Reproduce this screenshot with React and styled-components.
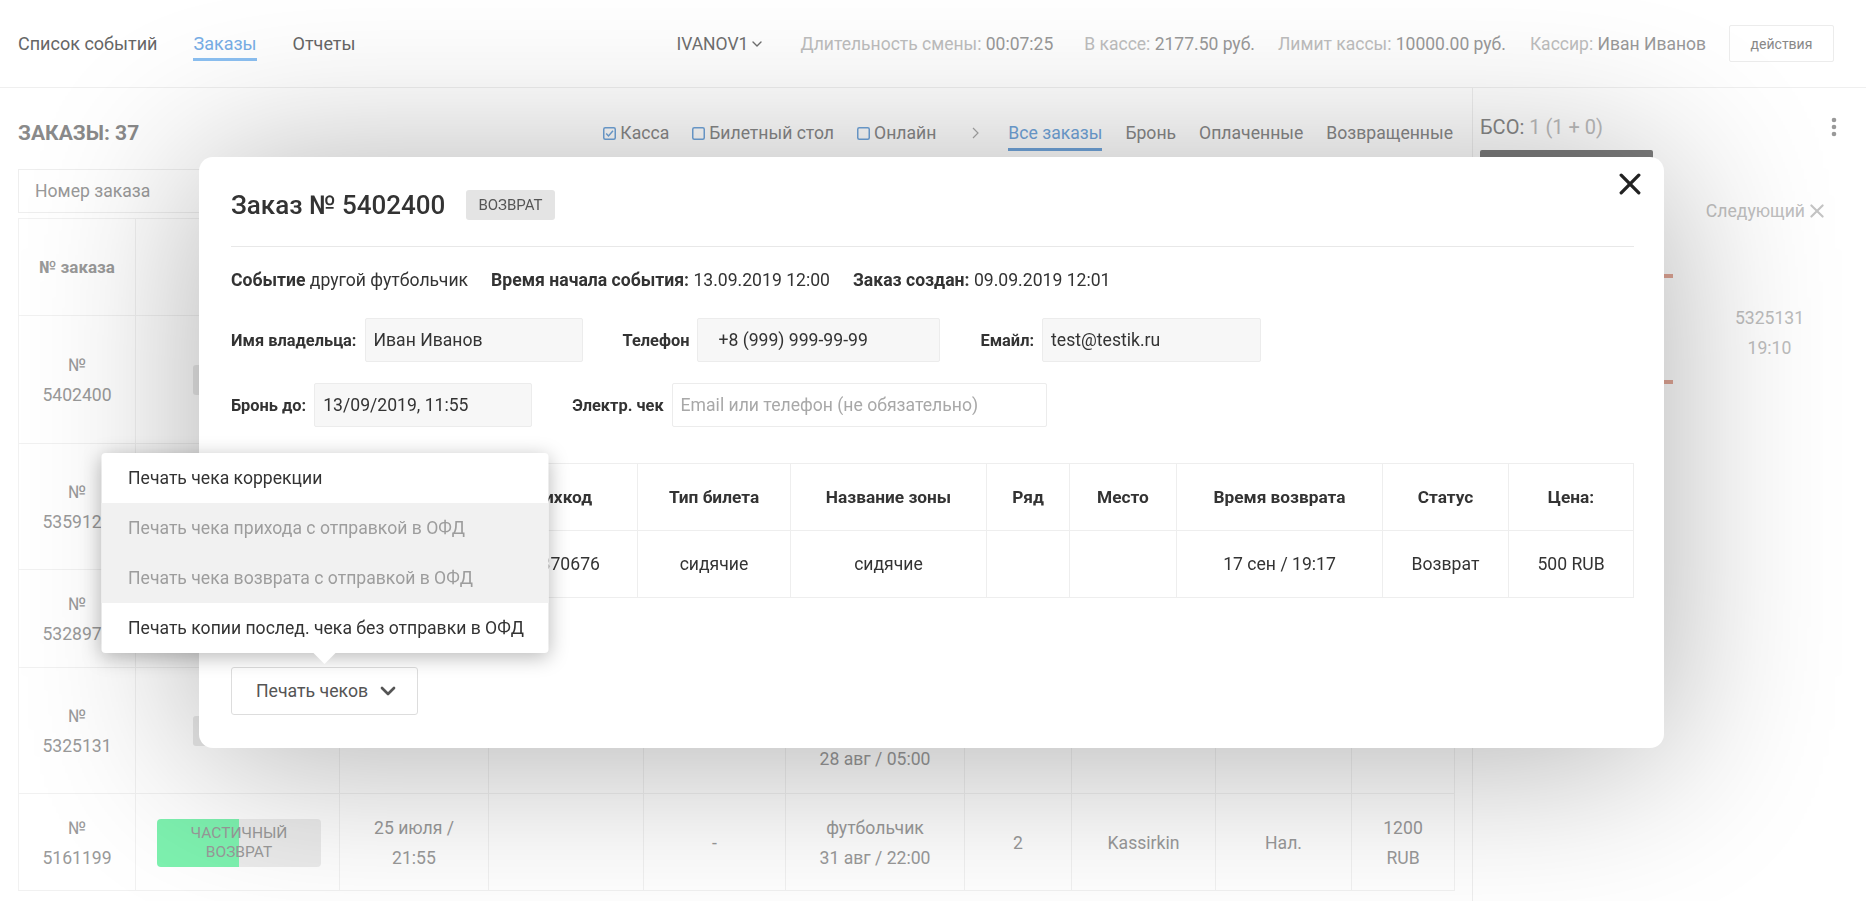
import React from "react";
import styled, { createGlobalStyle } from "styled-components";

const GlobalStyle = createGlobalStyle`
    html, body {
        margin: 0;
        padding: 0;
        background: #fff;
        font-family: Roboto, "Liberation Sans", Arial, sans-serif;
        color: #333;
        overflow: hidden;
    }
    * { box-sizing: border-box; }
`;

// rows of the orders list behind the modal; cells that the modal hides stay empty
const orders = [
    { num: "5402400", h: 128, badge: "short" },
    { num: "5359124", h: 126, badge: "short" },
    { num: "5328971", h: 98, badge: "none" },
    { num: "5325131", h: 126, badge: "short", event: ["28 авг / 05:00"] },
    { num: "5161199", h: 97, badge: "partial", date: ["25 июля /", "21:55"], code: "-", event: ["футбольчик", "31 авг / 22:00"], qty: "2", cashier: "Kassirkin", pay: "Нал.", sum: ["1200", "RUB"] },
];

const bgCols = [117, 204, 149, 155, 142, 179, 107, 144, 136, 103];
const ticketCols = [232, 174, 153, 196, 83, 107, 206, 126, 125];

const menuItems = [
    { text: "Печать чека коррекции", disabled: false },
    { text: "Печать чека прихода с отправкой в ОФД", disabled: true },
    { text: "Печать чека возврата с отправкой в ОФД", disabled: true },
    { text: "Печать копии послед. чека без отправки в ОФД", disabled: false },
];

function Chevron({ size = 12, stroke = 2, color = "currentColor" }) {
    return (
        <svg width={size} height={size} viewBox="0 0 12 12" fill="none">
            <polyline points="2,4 6,8 10,4" stroke={color} strokeWidth={stroke} strokeLinecap="round" strokeLinejoin="round" />
        </svg>
    );
}

function Cross({ size, stroke, color }) {
    return (
        <svg width={size} height={size} viewBox="0 0 20 20" fill="none">
            <line x1="2" y1="2" x2="18" y2="18" stroke={color} strokeWidth={stroke} strokeLinecap="round" />
            <line x1="18" y1="2" x2="2" y2="18" stroke={color} strokeWidth={stroke} strokeLinecap="round" />
        </svg>
    );
}

function CheckBox({ checked }) {
    return (
        <svg width="13" height="13" viewBox="0 0 13 13" fill="none">
            <rect x="0.75" y="0.75" width="11.5" height="11.5" rx="1.5" stroke="#72a6dc" strokeWidth="1.5" />
            {checked && <polyline points="3.2,6.6 5.5,9 10,3.8" stroke="#72a6dc" strokeWidth="1.5" fill="none" />}
        </svg>
    );
}

function lines(arr) {
    if (!arr) return null;
    return arr.map((l, i) => <div key={i}>{l}</div>);
}

export default function App() {
    return (
        <Page>
            <GlobalStyle />
            <TopBar>
                <NavLinks>
                    <NavLink>Список событий</NavLink>
                    <NavLink $active>Заказы</NavLink>
                    <NavLink>Отчеты</NavLink>
                </NavLinks>
                <Stats>
                    <UserName>IVANOV1 <Chevron size={12} stroke={1.4} /></UserName>
                    <Stat $ml={37}>Длительность смены: <b>00:07:25</b></Stat>
                    <Stat $ml={31}>В кассе: <b>2177.50 руб.</b></Stat>
                    <Stat $ml={23}>Лимит кассы: <b>10000.00 руб.</b></Stat>
                    <Stat $ml={24}>Кассир: <b>Иван Иванов</b></Stat>
                    <ActionsButton>действия</ActionsButton>
                </Stats>
            </TopBar>

            <Main>
                <LeftPane>
                    <Toolbar>
                        <PageTitle>ЗАКАЗЫ: 37</PageTitle>
                        <Filters>
                            <Check><CheckBox checked />Касса</Check>
                            <Check><CheckBox />Билетный стол</Check>
                            <Check><CheckBox />Онлайн</Check>
                            <Arrow>
                                <svg width="9" height="14" viewBox="0 0 9 14" fill="none">
                                    <polyline points="2,2 7,7 2,12" stroke="#aaa" strokeWidth="1.2" />
                                </svg>
                            </Arrow>
                            <Tab $active>Все заказы</Tab>
                            <Tab>Бронь</Tab>
                            <Tab>Оплаченные</Tab>
                            <Tab>Возвращенные</Tab>
                        </Filters>
                    </Toolbar>

                    <Search placeholder="Номер заказа" />

                    <OrdersTable>
                        <colgroup>
                            {bgCols.map((w, i) => <col key={i} style={{ width: w }} />)}
                        </colgroup>
                        <thead>
                            <tr>
                                <OrdersHead>№ заказа</OrdersHead>
                                {bgCols.slice(1).map((w, i) => <OrdersHead key={i} />)}
                            </tr>
                        </thead>
                        <tbody>
                            {orders.map((o) => (
                                <OrderRow key={o.num} $h={o.h}>
                                    <OrderCell>№<br />{o.num}</OrderCell>
                                    <OrderCell>
                                        {o.badge === "short" && <ShortBadge>возврат</ShortBadge>}
                                        {o.badge === "partial" && (
                                            <PartialBadge $progress={50}>частичный<br />возврат</PartialBadge>
                                        )}
                                    </OrderCell>
                                    <OrderCell>{lines(o.date)}</OrderCell>
                                    <OrderCell></OrderCell>
                                    <OrderCell>{o.code}</OrderCell>
                                    <OrderCell $bottom={o.num === "5325131"}>{lines(o.event)}</OrderCell>
                                    <OrderCell>{o.qty}</OrderCell>
                                    <OrderCell>{o.cashier}</OrderCell>
                                    <OrderCell>{o.pay}</OrderCell>
                                    <OrderCell>{lines(o.sum)}</OrderCell>
                                </OrderRow>
                            ))}
                        </tbody>
                    </OrdersTable>
                </LeftPane>

                <RightPane>
                    <BsoRow>
                        <Bso>БСО: <span>1 (1 + 0)</span></Bso>
                        <svg width="6" height="20" viewBox="0 0 6 20">
                            <circle cx="3" cy="3" r="2.3" fill="#999" />
                            <circle cx="3" cy="10" r="2.3" fill="#999" />
                            <circle cx="3" cy="17" r="2.3" fill="#999" />
                        </svg>
                    </BsoRow>
                    <BsoBar />
                    <NextRow>Следующий <Cross size={14} stroke={3} color="#c4c4c4" /></NextRow>
                    <Timeline>
                        <TimelineSlot />
                        <TimelineText>5325131<br />19:10</TimelineText>
                    </Timeline>
                </RightPane>
            </Main>

            <Overlay>
                <Modal>
                    <CloseButton>
                        <Cross size={22} stroke={3} color="#222" />
                    </CloseButton>
                    <ModalHeader>
                        <ModalTitle>Заказ № 5402400</ModalTitle>
                        <StatusTag>возврат</StatusTag>
                    </ModalHeader>

                    <InfoRow>
                        <span><b>Событие</b> другой футбольчик</span>
                        <span><b>Время начала события:</b> 13.09.2019 12:00</span>
                        <span><b>Заказ создан:</b> 09.09.2019 12:01</span>
                    </InfoRow>

                    <FieldsRow $top={27}>
                        <Field>
                            <FieldLabel>Имя владельца:</FieldLabel>
                            <FieldInput $w={218} readOnly value="Иван Иванов" />
                        </Field>
                        <Field>
                            <FieldLabel>Телефон</FieldLabel>
                            <FieldInput $w={243} $pad={20} readOnly value="+8 (999) 999-99-99" />
                        </Field>
                        <Field>
                            <FieldLabel>Емайл:</FieldLabel>
                            <FieldInput $w={219} readOnly value="test@testik.ru" />
                        </Field>
                    </FieldsRow>

                    <FieldsRow $top={21}>
                        <Field>
                            <FieldLabel>Бронь до:</FieldLabel>
                            <FieldInput $w={218} readOnly value="13/09/2019, 11:55" />
                        </Field>
                        <Field>
                            <FieldLabel>Электр. чек</FieldLabel>
                            <FieldInput $w={375} $white placeholder="Email или телефон (не обязательно)" />
                        </Field>
                    </FieldsRow>

                    <TicketTable>
                        <colgroup>
                            {ticketCols.map((w, i) => <col key={i} style={{ width: w }} />)}
                        </colgroup>
                        <thead>
                            <tr>
                                <TicketHead></TicketHead>
                                <TicketHead>Штрихкод</TicketHead>
                                <TicketHead>Тип билета</TicketHead>
                                <TicketHead>Название зоны</TicketHead>
                                <TicketHead>Ряд</TicketHead>
                                <TicketHead>Место</TicketHead>
                                <TicketHead>Время возврата</TicketHead>
                                <TicketHead>Статус</TicketHead>
                                <TicketHead>Цена:</TicketHead>
                            </tr>
                        </thead>
                        <tbody>
                            <tr>
                                <TicketCell></TicketCell>
                                <TicketCell>9843370676</TicketCell>
                                <TicketCell>сидячие</TicketCell>
                                <TicketCell>сидячие</TicketCell>
                                <TicketCell></TicketCell>
                                <TicketCell></TicketCell>
                                <TicketCell>17 сен / 19:17</TicketCell>
                                <TicketCell>Возврат</TicketCell>
                                <TicketCell>500 RUB</TicketCell>
                            </tr>
                        </tbody>
                    </TicketTable>

                    <PrintWrap>
                        <PrintMenu>
                            {menuItems.map((m) => (
                                <MenuItem key={m.text} $disabled={m.disabled}>{m.text}</MenuItem>
                            ))}
                        </PrintMenu>
                        <PrintButton>
                            Печать чеков
                            <Chevron size={18} stroke={1.8} color="#555" />
                        </PrintButton>
                    </PrintWrap>
                </Modal>
            </Overlay>
        </Page>
    );
}

const Page = styled.div`
    width: 100%;
    height: 100vh;
    display: flex;
    flex-direction: column;
    position: relative;
`;

const TopBar = styled.header`
    height: 88px;
    flex-shrink: 0;
    display: flex;
    align-items: center;
    padding: 0 32px 0 18px;
    border-bottom: 1px solid #efefef;
`;

const NavLinks = styled.nav`
    display: flex;
    gap: 36px;
`;

const NavLink = styled.a`
    font-size: 18px;
    line-height: 22px;
    padding: 6px 0 3px;
    color: ${(p) => (p.$active ? "#78aee6" : "#666")};
    border-bottom: 3px solid ${(p) => (p.$active ? "#8cc0f2" : "transparent")};
    cursor: pointer;
`;

const Stats = styled.div`
    margin-left: auto;
    display: flex;
    align-items: center;
    font-size: 17.5px;
`;

const UserName = styled.div`
    display: flex;
    align-items: center;
    gap: 3px;
    color: #6f6f6f;
`;

const Stat = styled.div`
    margin-left: ${(p) => p.$ml}px;
    color: #bdbdbd;
    b {
        font-weight: 400;
        color: #999;
    }
`;

const ActionsButton = styled.button`
    margin-left: 23px;
    width: 105px;
    height: 37px;
    background: #fff;
    border: 1px solid #ececec;
    border-radius: 2px;
    color: #888;
    font-family: inherit;
    font-size: 14px;
`;

const Main = styled.div`
    flex: 1;
    display: flex;
`;

const LeftPane = styled.section`
    width: 1473px;
    flex-shrink: 0;
    padding: 0 19px 0 18px;
    border-right: 1px solid #eee;
`;

const Toolbar = styled.div`
    height: 65px;
    display: flex;
    align-items: flex-end;
    justify-content: space-between;
    padding-bottom: 2px;
`;

const PageTitle = styled.h1`
    margin: 0 0 6px;
    font-size: 21px;
    line-height: 24px;
    font-weight: 700;
    color: #8a8a8a;
`;

const Filters = styled.div`
    display: flex;
    align-items: flex-end;
    gap: 23px;
    font-size: 17.6px;
    color: #888;
`;

const Check = styled.label`
    display: flex;
    align-items: center;
    gap: 4px;
    line-height: 24px;
    margin-bottom: 6px;
`;

const Arrow = styled.span`
    display: flex;
    align-items: center;
    height: 24px;
    margin: 0 5px 6px 12px;
`;

const Tab = styled.span`
    line-height: 24px;
    padding-bottom: 3px;
    color: ${(p) => (p.$active ? "#72a6dc" : "#888")};
    border-bottom: 3px solid ${(p) => (p.$active ? "#72a6dc" : "transparent")};
`;

const Search = styled.input`
    display: block;
    margin-top: 16px;
    width: 340px;
    height: 44px;
    border: 1px solid #eee;
    padding: 0 16px;
    font-family: inherit;
    font-size: 17.6px;
    color: #555;
    outline: none;
    &::placeholder { color: #999; }
`;

const OrdersTable = styled.table`
    margin-top: 5px;
    width: 1436px;
    border-collapse: collapse;
    table-layout: fixed;
`;

const OrdersHead = styled.th`
    height: 97px;
    border: 1px solid #f1f1f1;
    font-size: 17px;
    font-weight: 700;
    color: #9a9a9a;
    text-align: center;
`;

const OrderRow = styled.tr`
    height: ${(p) => p.$h}px;
`;

const OrderCell = styled.td`
    border: 1px solid #f1f1f1;
    text-align: center;
    vertical-align: ${(p) => (p.$bottom ? "bottom" : "middle")};
    padding-bottom: ${(p) => (p.$bottom ? "19px" : "0")};
    font-size: 17.6px;
    line-height: 30px;
    color: #9a9a9a;
`;

const ShortBadge = styled.div`
    margin: 0 auto;
    width: 90px;
    height: 30px;
    line-height: 30px;
    border-radius: 3px;
    background: #e9e9e9;
    font-size: 13px;
    text-transform: uppercase;
    color: #999;
`;

const PartialBadge = styled.div`
    margin: 0 auto 0 20px;
    width: 164px;
    height: 48px;
    padding-top: 5px;
    border-radius: 4px;
    background: linear-gradient(90deg, #7ef2b0 ${(p) => p.$progress}%, #ececec ${(p) => p.$progress}%);
    font-size: 15.5px;
    line-height: 19px;
    text-transform: uppercase;
    color: #9a9a9a;
`;

const RightPane = styled.aside`
    flex: 1;
    display: flex;
    flex-direction: column;
`;

const BsoRow = styled.div`
    display: flex;
    justify-content: space-between;
    align-items: center;
    padding: 27px 29px 0 7px;
`;

const Bso = styled.div`
    font-size: 20px;
    line-height: 24px;
    color: #888;
    span { color: #bbb; }
`;

const BsoBar = styled.div`
    margin: 11px 0 0 7px;
    width: 173px;
    height: 40px;
    background: #7d7d7d;
    border-radius: 2px;
`;

const NextRow = styled.div`
    margin-top: 10px;
    padding-right: 42px;
    display: flex;
    justify-content: flex-end;
    align-items: center;
    gap: 5px;
    font-size: 17.6px;
    line-height: 22px;
    color: #c0c0c0;
`;

const Timeline = styled.div`
    margin-top: 52px;
    display: grid;
    grid-template-columns: 200px 1fr;
`;

const TimelineSlot = styled.div`
    height: 110px;
    border-top: 4px solid #e3a898;
    border-bottom: 4px solid #e3a898;
`;

const TimelineText = styled.div`
    align-self: center;
    padding-top: 8px;
    text-align: center;
    font-size: 17.6px;
    line-height: 30px;
    color: #bdbdbd;
`;

const Overlay = styled.div`
    position: fixed;
    inset: 0;
    display: flex;
    justify-content: center;
    align-items: flex-start;
    padding: 157px 3px 0 0;
`;

const Modal = styled.div`
    position: relative;
    width: 1465px;
    background: #fff;
    border-radius: 14px;
    padding: 0 30px 33px 32px;
    box-shadow: 0 10px 170px rgba(0, 0, 0, 0.32);
`;

const CloseButton = styled.button`
    position: absolute;
    top: 16px;
    right: 23px;
    padding: 0;
    border: 0;
    background: none;
    display: flex;
`;

const ModalHeader = styled.div`
    display: flex;
    align-items: center;
    gap: 21px;
    padding: 30px 0 23px;
    border-bottom: 1px solid #e8e8e8;
`;

const ModalTitle = styled.h2`
    margin: 0;
    font-size: 26px;
    line-height: 36px;
    font-weight: 500;
    color: #333;
`;

const StatusTag = styled.span`
    height: 30px;
    line-height: 30px;
    padding: 0 12px;
    border-radius: 3px;
    background: #e4e4e4;
    font-size: 15px;
    text-transform: uppercase;
    color: #555;
`;

const InfoRow = styled.div`
    margin-top: 22px;
    display: flex;
    gap: 23px;
    font-size: 17.6px;
    line-height: 22px;
    color: #333;
    b { font-weight: 700; }
`;

const FieldsRow = styled.div`
    margin-top: ${(p) => p.$top}px;
    display: flex;
    align-items: center;
    gap: 40px;
`;

const Field = styled.div`
    display: flex;
    align-items: center;
    gap: 8px;
`;

const FieldLabel = styled.span`
    font-size: 16.4px;
    font-weight: 700;
    color: #333;
`;

const FieldInput = styled.input`
    width: ${(p) => p.$w}px;
    height: 44px;
    padding: 0 0 0 ${(p) => p.$pad || 8}px;
    border: 1px solid #ececec;
    border-radius: 2px;
    background: ${(p) => (p.$white ? "#fff" : "#f7f7f7")};
    font-family: inherit;
    font-size: 17.6px;
    color: #333;
    outline: none;
    &::placeholder { color: #a8a8a8; }
`;

const TicketTable = styled.table`
    margin-top: 36px;
    width: 100%;
    border-collapse: collapse;
    table-layout: fixed;
`;

const TicketHead = styled.th`
    height: 67px;
    border: 1px solid #eee;
    font-size: 17.3px;
    font-weight: 700;
    color: #333;
    text-align: center;
`;

const TicketCell = styled.td`
    height: 67px;
    border: 1px solid #eee;
    font-size: 17.6px;
    color: #333;
    text-align: center;
`;

const PrintWrap = styled.div`
    position: relative;
    display: inline-block;
    margin-top: 69px;
`;

const PrintButton = styled.button`
    width: 187px;
    height: 48px;
    display: flex;
    align-items: center;
    gap: 11px;
    padding: 0 0 0 24px;
    background: #fff;
    border: 1px solid #ddd;
    border-radius: 3px;
    font-family: inherit;
    font-size: 17.7px;
    color: #555;
`;

const PrintMenu = styled.div`
    position: absolute;
    bottom: calc(100% + 14px);
    left: 50%;
    transform: translateX(-50%);
    width: 447px;
    background: #fff;
    border-radius: 4px;
    box-shadow: 0 4px 20px rgba(0, 0, 0, 0.28);
    z-index: 2;
    &::after {
        content: "";
        position: absolute;
        left: 50%;
        bottom: -11px;
        margin-left: -11px;
        border-left: 11px solid transparent;
        border-right: 11px solid transparent;
        border-top: 11px solid #fff;
    }
`;

const MenuItem = styled.div`
    height: 50px;
    line-height: 50px;
    padding-left: 27px;
    font-size: 17.6px;
    white-space: nowrap;
    color: ${(p) => (p.$disabled ? "#9d9d9d" : "#333")};
    background: ${(p) => (p.$disabled ? "#f1f1f1" : "transparent")};
    &:first-child { border-radius: 4px 4px 0 0; }
    &:last-child { border-radius: 0 0 4px 4px; }
`;
